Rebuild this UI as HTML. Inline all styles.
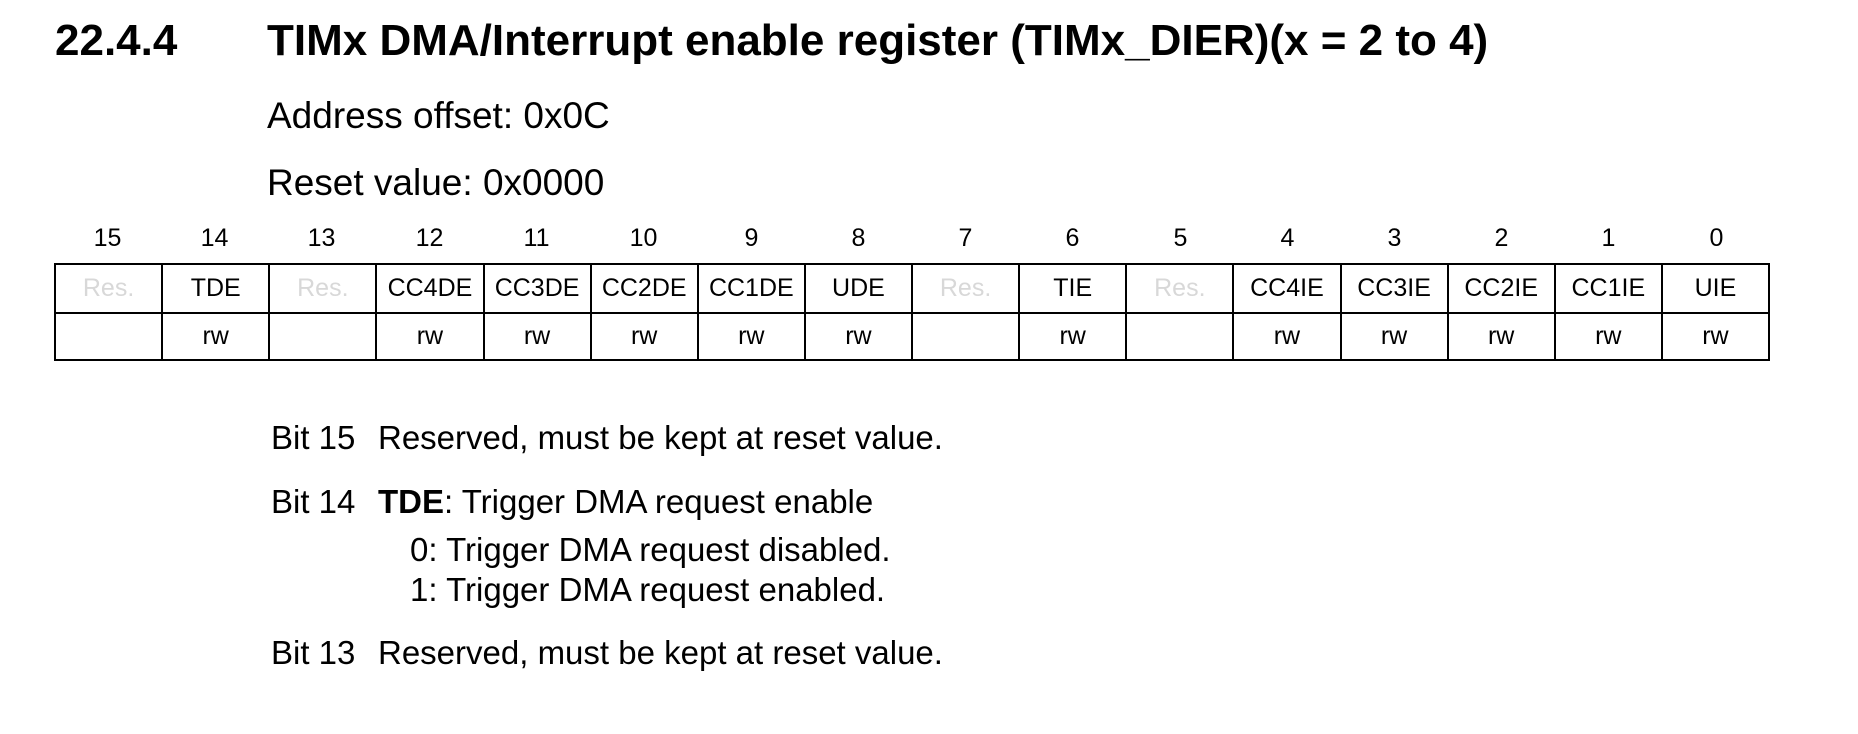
<!DOCTYPE html>
<html><head><meta charset="utf-8"><style>
body{margin:0;width:1858px;height:734px;background:#fff;position:relative;font-family:"Liberation Sans",Arial,sans-serif;color:#000;overflow:hidden}
.a{position:absolute;white-space:nowrap}
h1{position:absolute;margin:0;font-size:44px;font-weight:bold;line-height:48px;top:17px;white-space:nowrap}
table{position:absolute;left:54px;top:263px;width:1716px;border-collapse:collapse;table-layout:fixed}
td{border:2px solid #000;text-align:center;font-size:25px;padding:0;height:47px}
tr.r td{height:45px}
td.g{color:#d8d8d8}
.n{position:absolute;top:224px;width:107px;text-align:center;font-size:25px}
.t{font-size:33px;line-height:38px}
</style></head><body>
<h1 style="left:55px">22.4.4</h1>
<h1 style="left:267px">TIMx DMA/Interrupt enable register (TIMx_DIER)(x = 2 to 4)</h1>
<div class="a" style="left:267px;top:95px;font-size:37px;line-height:42px">Address offset: 0x0C</div>
<div class="a" style="left:267px;top:162px;font-size:37px;line-height:42px">Reset value: 0x0000</div>
<div class="n" style="left:54px">15</div><div class="n" style="left:161px">14</div><div class="n" style="left:268px">13</div><div class="n" style="left:376px">12</div><div class="n" style="left:483px">11</div><div class="n" style="left:590px">10</div><div class="n" style="left:698px">9</div><div class="n" style="left:805px">8</div><div class="n" style="left:912px">7</div><div class="n" style="left:1019px">6</div><div class="n" style="left:1127px">5</div><div class="n" style="left:1234px">4</div><div class="n" style="left:1341px">3</div><div class="n" style="left:1448px">2</div><div class="n" style="left:1555px">1</div><div class="n" style="left:1663px">0</div>
<table>
<tr><td class="g">Res.</td><td>TDE</td><td class="g">Res.</td><td>CC4DE</td><td>CC3DE</td><td>CC2DE</td><td>CC1DE</td><td>UDE</td><td class="g">Res.</td><td>TIE</td><td class="g">Res.</td><td>CC4IE</td><td>CC3IE</td><td>CC2IE</td><td>CC1IE</td><td>UIE</td></tr>
<tr class="r"><td></td><td>rw</td><td></td><td>rw</td><td>rw</td><td>rw</td><td>rw</td><td>rw</td><td></td><td>rw</td><td></td><td>rw</td><td>rw</td><td>rw</td><td>rw</td><td>rw</td></tr>
</table>
<div class="a t" style="left:271px;top:419px">Bit 15</div><div class="a t" style="left:378px;top:419px">Reserved, must be kept at reset value.</div>
<div class="a t" style="left:271px;top:483px">Bit 14</div><div class="a t" style="left:378px;top:483px"><b>TDE</b>: Trigger DMA request enable</div>
<div class="a t" style="left:410px;top:531px">0: Trigger DMA request disabled.</div>
<div class="a t" style="left:410px;top:571px">1: Trigger DMA request enabled.</div>
<div class="a t" style="left:271px;top:634px">Bit 13</div><div class="a t" style="left:378px;top:634px">Reserved, must be kept at reset value.</div>
</body></html>
